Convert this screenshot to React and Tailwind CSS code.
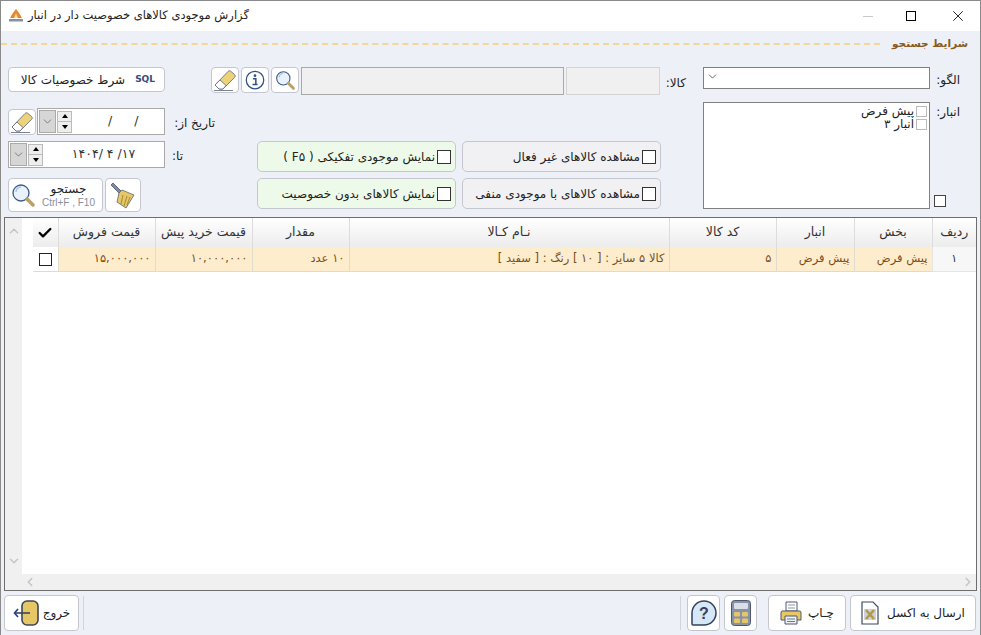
import React from 'react';
import { Check, ChevronDown, ChevronLeft, ChevronRight, ChevronUp, X } from 'lucide-react';

const font = "font-['DejaVu_Sans',sans-serif]";

const Eraser = () => (
  <svg width="24" height="24" viewBox="0 0 24 24">
    <path d="M2 17 15 3.5 c1-1 2-1 3 0 l3.5 3 c1 1 1 2 0 3 L10 21 H6 Z" fill="#ecd27a" stroke="#5b6478" strokeWidth="0.8" />
    <path d="M2 17 6 21 H10 L13 17.5 L7 12 Z" fill="#fff" stroke="#5b6478" strokeWidth="0.8" />
    <path d="M1 22.5 H20" stroke="#5b6478" strokeWidth="0.8" />
  </svg>
);

const Lens = ({ size = 22 }) => (
  <svg width={size} height={size} viewBox="0 0 24 24">
    <circle cx="10" cy="10" r="8" fill="#eaf3fb" stroke="#3e5a86" strokeWidth="1.3" />
    <path d="M5 9a5 5 0 0 1 5-5" fill="none" stroke="#a9c6e4" strokeWidth="1.5" />
    <path d="M16 16 22 22" stroke="#b7a06a" strokeWidth="3.5" strokeLinecap="round" />
  </svg>
);

const Info = () => (
  <svg width="20" height="20" viewBox="0 0 24 24">
    <circle cx="12" cy="12" r="10.5" fill="#fff" stroke="#2f4f85" strokeWidth="1.5" />
    <circle cx="12" cy="6.8" r="1.6" fill="#2f4f85" />
    <path d="M9.5 10.5H13V17.5H15M9 17.5H13" fill="none" stroke="#2f4f85" strokeWidth="1.8" />
  </svg>
);

const Broom = () => (
  <svg width="28" height="28" viewBox="0 0 28 28">
    <path d="M2 4 4 2 13 11 11 13Z" fill="#7d8aa0" stroke="#4d5870" strokeWidth="0.8" />
    <path d="M10 12 13 9 25 14 17 27 8 21Z" fill="#e6c766" stroke="#5b6478" strokeWidth="0.8" />
    <path d="M14 14 12 23M18 15 15 25M21 16 18 24" stroke="#a88a36" strokeWidth="1" />
  </svg>
);

const Logo = () => (
  <svg width="16" height="14" viewBox="0 0 16 14">
    <path d="M8 0 L11 4 L14 9 H2 L5 4 Z" fill="#e8842c" />
    <path d="M8 4 L10 9 H6 Z" fill="#f8d9a0" />
    <rect x="1" y="10" width="14" height="2.5" fill="#8a8f9c" />
  </svg>
);

const Excel = () => (
  <svg width="18" height="24" viewBox="0 0 18 24">
    <path d="M1 1H12L17 6V23H1Z" fill="#fff" stroke="#3f4a60" strokeWidth="1.2" />
    <rect x="3" y="8" width="12" height="11" fill="#cdd2de" />
    <path d="M5 9 13 18M13 9 5 18" stroke="#b39a45" strokeWidth="2.6" />
  </svg>
);

const Printer = () => (
  <svg width="22" height="24" viewBox="0 0 22 24">
    <path d="M6 1H17V10H6Z" fill="#fff" stroke="#4d5870" />
    <path d="M8 4H15M8 7H15" stroke="#8b95a8" />
    <path d="M2 10H20Q21 10 21 12V19H1V12Q1 10 2 10Z" fill="#e9c763" stroke="#4d5870" />
    <path d="M5 15H17V23H5Z" fill="#eef1f6" stroke="#4d5870" />
    <path d="M7 18H15M7 20.5H15" stroke="#6d788d" />
  </svg>
);

const Calculator = () => (
  <svg width="20" height="26" viewBox="0 0 20 26">
    <rect x="0.5" y="0.5" width="19" height="25" rx="3" fill="#8893a8" stroke="#4d5870" />
    <rect x="3" y="3" width="14" height="6" rx="1" fill="#d9dee8" />
    <rect x="3" y="12" width="6" height="4.5" rx="1" fill="#e6c766" />
    <rect x="11" y="12" width="6" height="4.5" rx="1" fill="#e6c766" />
    <rect x="3" y="18.5" width="6" height="4.5" rx="1" fill="#e6c766" />
    <rect x="11" y="18.5" width="6" height="4.5" rx="1" fill="#e6c766" />
  </svg>
);

const Help = () => (
  <svg width="26" height="26" viewBox="0 0 26 26">
    <path d="M13 1a12 12 0 1 1 0 24H2a1 1 0 0 1-1-1V13A12 12 0 0 1 13 1Z" fill="#d6e8f7" stroke="#33405a" strokeWidth="1.5" />
    <text x="13" y="19" textAnchor="middle" fontSize="16" fontWeight="700" fill="#33405a" fontFamily="Liberation Sans">?</text>
  </svg>
);

const ExitIcon = () => (
  <svg width="26" height="26" viewBox="0 0 26 26">
    <rect x="9" y="1" width="16" height="24" rx="5" fill="#e6c766" stroke="#3d4658" strokeWidth="1.6" />
    <path d="M2 13H17" stroke="#3d4658" strokeWidth="1.6" />
    <path d="M5 9 1.5 13 5 17" fill="none" stroke="#1f3f8f" strokeWidth="1.6" />
  </svg>
);

const Box = ({ className = 'w-3.5 h-3.5 border-[#333]' }) => (
  <span className={`inline-block shrink-0 border bg-white ${className}`} />
);

const IconButton = ({ children, className = 'w-7 h-[26px]' }) => (
  <button className={`flex items-center justify-center rounded-[4px] border border-[#c4c7cf] bg-white ${className}`}>
    {children}
  </button>
);

const OptionButton = ({ label, green }) => (
  <label className={`flex items-center gap-0.5 w-[199px] h-[31px] rounded-[5px] border border-[#c4c7cf] pr-[4px] text-[12px] text-[#222] ${green ? 'bg-[#edfaea]' : 'bg-[#f1f1f3]'}`}>
    <Box />
    <span>{label}</span>
  </label>
);

const DateInput = ({ value, className }) => (
  <div className={`flex items-center h-[27px] border border-[#a9a9a9] bg-white ${className}`}>
    <span className="flex-1 text-center text-[12.5px] tracking-[2.5px] whitespace-pre text-[#333]" dir="ltr">{value}</span>
    <div className="flex flex-col w-[15px] h-[22px] border border-[#bbb] bg-[#eee] text-black">
      <span className="flex-1 flex items-center justify-center border-b border-[#bbb]"><span className="w-0 h-0 border-x-[3px] border-x-transparent border-b-[4px] border-b-black" /></span>
      <span className="flex-1 flex items-center justify-center"><span className="w-0 h-0 border-x-[3px] border-x-transparent border-t-[4px] border-t-black" /></span>
    </div>
    <div className="flex items-center justify-center w-[17px] h-[23px] mx-px bg-[#d6d6d6] border border-[#aaa]">
      <ChevronDown size={13} strokeWidth={1} className="text-[#333]" />
    </div>
  </div>
);

const columns = [
  { title: 'ردیف', width: 'w-[44px]' },
  { title: 'بخش', width: 'w-[78px]' },
  { title: 'انبار', width: 'w-[78px]' },
  { title: 'کد کالا', width: 'w-[107px]' },
  { title: 'نـام کـالا', width: 'w-[320px]' },
  { title: 'مقدار', width: 'w-[97px]' },
  { title: 'قیمت خرید پیش', width: 'w-[97px]' },
  { title: 'قیمت فروش', width: 'w-[97px]' },
];

const cell = 'border-l border-b border-[#e0dccd] px-1 text-[11.5px] text-[#7a4f1e]';

export default function App() {
  return (
    <div dir="rtl" className={`${font} flex flex-col w-[981px] h-[635px] overflow-hidden bg-[#eef0f8] border-x border-t border-[#8a8a8a]`}>
      {/* Title bar */}
      <div className="flex items-center justify-between h-[30px] shrink-0 bg-white pl-[7px] pr-[13px]">
        <div className="flex items-center gap-1 order-last text-[11.5px] text-[#222]">
          <span>گزارش موجودی کالاهای خصوصیت دار در انبار</span>
          <Logo />
        </div>
        <div className="flex items-center gap-[33px] order-first text-[#111]">
          <X size={18} strokeWidth={1.2} />
          <span className="w-[10px] h-[10px] border border-black" />
          <span className="w-[10px] h-px bg-[#c8c8c8]" />
        </div>
      </div>

      {/* Section header */}
      <div className="flex items-center h-[26px] shrink-0 pr-[12px]">
        <span className="text-[10.5px] font-bold text-[#8a5a20]">شرایط جستجو</span>
        <span className="flex-1 mr-3 border-t-2 border-dashed border-[#f3d894]" />
      </div>

      {/* Search form */}
      <div className="flex h-[150px] shrink-0 mt-[10px] pr-[20px] pl-[7px] text-[12px] text-[#222]">
        <div className="w-[257px] shrink-0 flex flex-col">
          <div className="flex items-start gap-1.5">
            <span className="w-[24px] pt-[4px]">الگو:</span>
            <div className="flex items-center justify-end flex-1 h-[22px] border border-[#808080] bg-white pl-[2px]">
              <ChevronDown size={13} strokeWidth={1.25} className="text-[#222] mb-1" />
            </div>
          </div>
          <div className="flex items-stretch gap-1.5 mt-[13px]">
            <div className="flex flex-col justify-between w-[24px] pt-px">
              <span>انبار:</span>
              <Box className="w-3 h-3 border-[#444] mb-[2px] self-end -ml-[2px]" />
            </div>
            <div className="flex-1 h-[107px] border border-[#808080] bg-white pr-[2px] pt-[2px] leading-[13px]">
              <div className="flex items-center gap-0.5"><Box className="w-[11px] h-[11px] border-[#bbb]" />پیش فرض</div>
              <div className="flex items-center gap-0.5"><Box className="w-[11px] h-[11px] border-[#bbb]" />انبار ۳</div>
            </div>
          </div>
        </div>

        <div className="flex flex-col w-[475px] shrink-0 mr-[17px]">
          <div className="flex items-start h-[74px]">
            <span className="w-[25px] pt-[7px]">کالا:</span>
            <div className="w-[94px] h-[28px] mr-px border border-[#d4d4d4] bg-[#f0f0f0]" />
            <div className="w-[264px] h-[28px] mr-[2px] border border-[#a9a9a9] bg-[#f0f0f0]" />
            <div className="flex gap-0.5 mr-[2px]">
              <IconButton><Lens size={20} /></IconButton>
              <IconButton><Info /></IconButton>
              <IconButton><Eraser /></IconButton>
            </div>
          </div>
          <div className="grid grid-cols-[199px_199px] gap-x-1.5 gap-y-[6px] pr-[25px]">
            <OptionButton label="مشاهده کالاهای غیر فعال" />
            <OptionButton label="نمایش موجودی تفکیکی ( F۵ )" green />
            <OptionButton label="مشاهده کالاهای با موجودی منفی" />
            <OptionButton label="نمایش کالاهای بدون خصوصیت" green />
          </div>
        </div>

        <div className="flex flex-col w-[207px] shrink-0 -mr-1">
          <button className="flex items-center gap-2.5 self-end w-[157px] h-[25px] rounded-[4px] border border-[#c4c7cf] bg-white pr-[9px]">
            <span className="text-[9px] font-bold text-[#3a4a7a]" dir="ltr">SQL</span>
            <span>شرط خصوصیات کالا</span>
          </button>
          <div className="flex items-center gap-[7px] mt-[16px]">
            <span className="w-[43px] pt-[3px]">تاریخ از:</span>
            <DateInput value="  /   /" className="w-[128px]" />
            <IconButton className="w-7 h-[26px] -mr-[6px]"><Eraser /></IconButton>
          </div>
          <div className="flex items-center gap-[7px] mt-[6px]">
            <span className="w-[43px] text-left pt-[2px]">تا:</span>
            <DateInput value="۱۴۰۴/ ۴ /۱۷" className="w-[157px]" />
          </div>
          <div className="flex gap-0.5 self-end mt-[10px]">
            <IconButton className="w-[36px] h-[34px]"><Broom /></IconButton>
            <button className="flex items-center justify-between w-[95px] h-[34px] rounded-[4px] border border-[#c4c7cf] bg-white pl-0.5 pr-[7px]">
              <span className="flex flex-col items-center">
                <span className="leading-[16px]">جستجو</span>
                <span className="font-['Liberation_Sans',sans-serif] text-[10px] whitespace-nowrap text-[#8a8f9c] leading-[12px]" dir="ltr">Ctrl+F , F10</span>
              </span>
              <Lens size={24} />
            </button>
          </div>
        </div>
      </div>

      {/* Results table */}
      <div className="flex flex-col h-[374px] shrink-0 mx-[3px] border border-[#6e6e6e] bg-white">
        <div className="flex flex-1 min-h-0">
          <table className="table-fixed w-[943px] h-fit border-collapse">
            <colgroup>
              {columns.map((c) => <col key={c.title} className={c.width} />)}
              <col className="w-[25px]" />
            </colgroup>
            <thead>
              <tr className="h-[29px] bg-gradient-to-b from-white to-[#ececec] text-[12.5px] text-[#333]">
                {columns.map((c) => (
                  <th key={c.title} className="border-l border-[#dcdcdc] font-normal">{c.title}</th>
                ))}
                <th className="text-black"><Check size={16} strokeWidth={3.5} className="mx-auto" /></th>
              </tr>
            </thead>
            <tbody>
              <tr className="h-[24px] bg-[#fdedcd]">
                <td className="border-l border-b border-[#e5e5e5] bg-[#f7f7f7] text-center text-[11px] text-[#333]">۱</td>
                <td className={cell}>پیش فرض</td>
                <td className={cell}>پیش فرض</td>
                <td className={cell}>۵</td>
                <td className={cell}>کالا ۵ سایز : [ ۱۰ ] رنگ : [ سفید ]</td>
                <td className={cell}>۱۰ عدد</td>
                <td className={cell}><span dir="ltr">۱۰,۰۰۰,۰۰۰</span></td>
                <td className={cell}><span dir="ltr">۱۵,۰۰۰,۰۰۰</span></td>
                <td className="border-b border-[#e0dccd] bg-white text-center"><Box className="w-[13px] h-[13px] border-[#222] align-middle" /></td>
              </tr>
            </tbody>
          </table>
          <div className="flex-1" />
          <div className="flex flex-col justify-between items-center w-[17px] py-1.5 bg-[#f0f0f0] text-[#c4c4c4]">
            <ChevronUp size={14} strokeWidth={2.5} />
            <ChevronDown size={14} strokeWidth={2.5} />
          </div>
        </div>
        <div className="flex items-center justify-between h-[16px] shrink-0 bg-[#f0f0f0] pr-px pl-[18px] text-[#c4c4c4]">
          <ChevronRight size={14} strokeWidth={2.5} />
          <ChevronLeft size={14} strokeWidth={2.5} />
        </div>
      </div>

      {/* Footer */}
      <div className="flex items-center flex-1 pr-1 pl-[3px] text-[12px] text-[#222]">
        <button className="flex items-center justify-center gap-2 w-[126px] h-[36px] rounded-[4px] border border-[#c4c7cf] bg-white">
          <span>ارسال به اکسل</span>
          <Excel />
        </button>
        <button className="flex items-center justify-center gap-1.5 w-[78px] h-[36px] mr-1 rounded-[4px] border border-[#c4c7cf] bg-white">
          <span>چـاپ</span>
          <Printer />
        </button>
        <IconButton className="w-[33px] h-[36px] mr-[11px]"><Calculator /></IconButton>
        <IconButton className="w-[33px] h-[36px] mr-1"><Help /></IconButton>
        <span className="w-px h-[34px] mr-1.5 bg-[#d2d4dc]" />
        <span className="w-px h-[34px] mr-auto bg-[#d2d4dc]" />
        <button className="flex items-center justify-center gap-1 w-[75px] h-[36px] mr-1 rounded-[4px] border border-[#c4c7cf] bg-white">
          <span>خروج</span>
          <ExitIcon />
        </button>
      </div>
    </div>
  );
}
